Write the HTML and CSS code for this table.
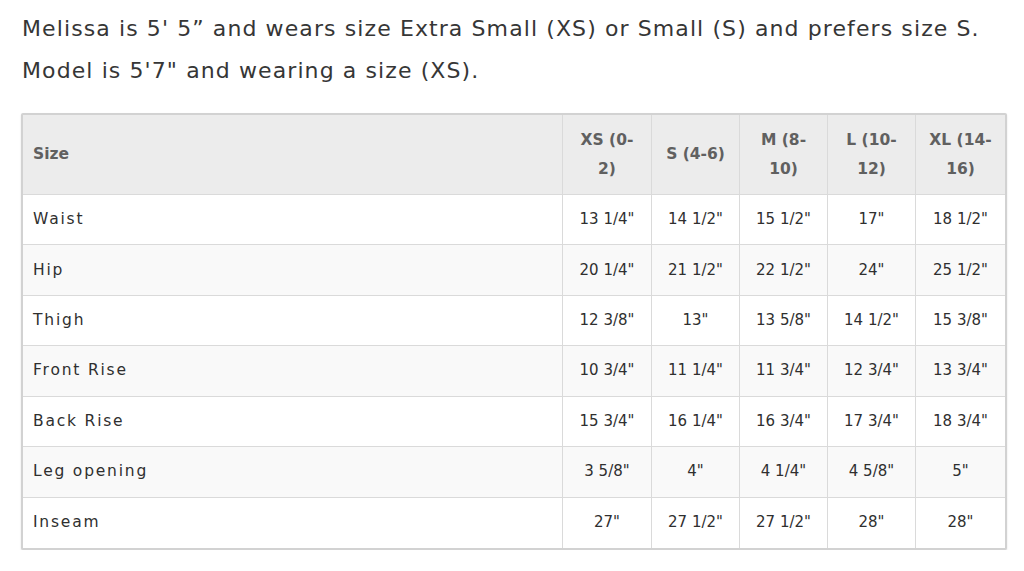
FILE: index.html
```html
<!DOCTYPE html>
<html lang="en">
<head>
<meta charset="utf-8">
<title>Size chart</title>
<link rel="stylesheet" href="styles.css">
</head>
<body>
<div class="page">
  <p class="intro">Melissa is 5' 5” and wears size Extra Small (XS) or Small (S) and prefers size S.<br>Model is 5'7" and wearing a size (XS).</p>
  <div class="chart" role="table">
    <div class="cell head label">Size</div>
    <div class="cell head">XS (0-2)</div>
    <div class="cell head">S (4-6)</div>
    <div class="cell head">M (8-10)</div>
    <div class="cell head">L (10-12)</div>
    <div class="cell head last">XL (14-16)</div>

    <div class="cell label">Waist</div>
    <div class="cell">13 1/4"</div>
    <div class="cell">14 1/2"</div>
    <div class="cell">15 1/2"</div>
    <div class="cell">17"</div>
    <div class="cell last">18 1/2"</div>

    <div class="cell label alt">Hip</div>
    <div class="cell alt">20 1/4"</div>
    <div class="cell alt">21 1/2"</div>
    <div class="cell alt">22 1/2"</div>
    <div class="cell alt">24"</div>
    <div class="cell alt last">25 1/2"</div>

    <div class="cell label">Thigh</div>
    <div class="cell">12 3/8"</div>
    <div class="cell">13"</div>
    <div class="cell">13 5/8"</div>
    <div class="cell">14 1/2"</div>
    <div class="cell last">15 3/8"</div>

    <div class="cell label alt">Front Rise</div>
    <div class="cell alt">10 3/4"</div>
    <div class="cell alt">11 1/4"</div>
    <div class="cell alt">11 3/4"</div>
    <div class="cell alt">12 3/4"</div>
    <div class="cell alt last">13 3/4"</div>

    <div class="cell label">Back Rise</div>
    <div class="cell">15 3/4"</div>
    <div class="cell">16 1/4"</div>
    <div class="cell">16 3/4"</div>
    <div class="cell">17 3/4"</div>
    <div class="cell last">18 3/4"</div>

    <div class="cell label alt">Leg opening</div>
    <div class="cell alt">3 5/8"</div>
    <div class="cell alt">4"</div>
    <div class="cell alt">4 1/4"</div>
    <div class="cell alt">4 5/8"</div>
    <div class="cell alt last">5"</div>

    <div class="cell label bottom">Inseam</div>
    <div class="cell bottom">27"</div>
    <div class="cell bottom">27 1/2"</div>
    <div class="cell bottom">27 1/2"</div>
    <div class="cell bottom">28"</div>
    <div class="cell bottom last">28"</div>
  </div>
</div>
</body>
</html>
```
FILE: styles.css
```css
html, body {
  margin: 0;
  padding: 0;
  background: #ffffff;
}

.page {
  padding: 8px 0 0 21px;
  font-family: "DejaVu Sans", "Noto Sans", sans-serif;
  color: #333333;
}

.intro {
  margin: 0 0 21px 1px;
  font-size: 22px;
  line-height: 42px;
  letter-spacing: 1.1px;
  color: #363636;
}

.chart {
  display: grid;
  width: 982px;
  grid-template-columns: 540px 89px 88px 88px 88px 89px;
  grid-template-rows: 80px repeat(7, 50.43px);
  border: 2px solid #d2d2d2;
  border-radius: 2px;
  box-shadow: 0 1px 2px rgba(0, 0, 0, 0.12);
  background: #ffffff;
}

.cell {
  box-sizing: border-box;
  display: flex;
  align-items: center;
  justify-content: center;
  text-align: center;
  padding: 0 12px;
  font-size: 15px;
  line-height: 29px;
  color: #2f2f2f;
  border-right: 1px solid #dadada;
  border-bottom: 1px solid #dadada;
}

.cell.last {
  border-right: 0;
}

.cell.bottom {
  border-bottom: 0;
}

.cell.label {
  justify-content: flex-start;
  text-align: left;
  padding-left: 10px;
  font-size: 15.5px;
  letter-spacing: 1.8px;
}

.cell.alt {
  background: #f9f9f9;
}

.cell.head {
  background: #ececec;
  color: #606060;
  font-weight: bold;
  font-size: 15.5px;
  letter-spacing: 0;
}
```
